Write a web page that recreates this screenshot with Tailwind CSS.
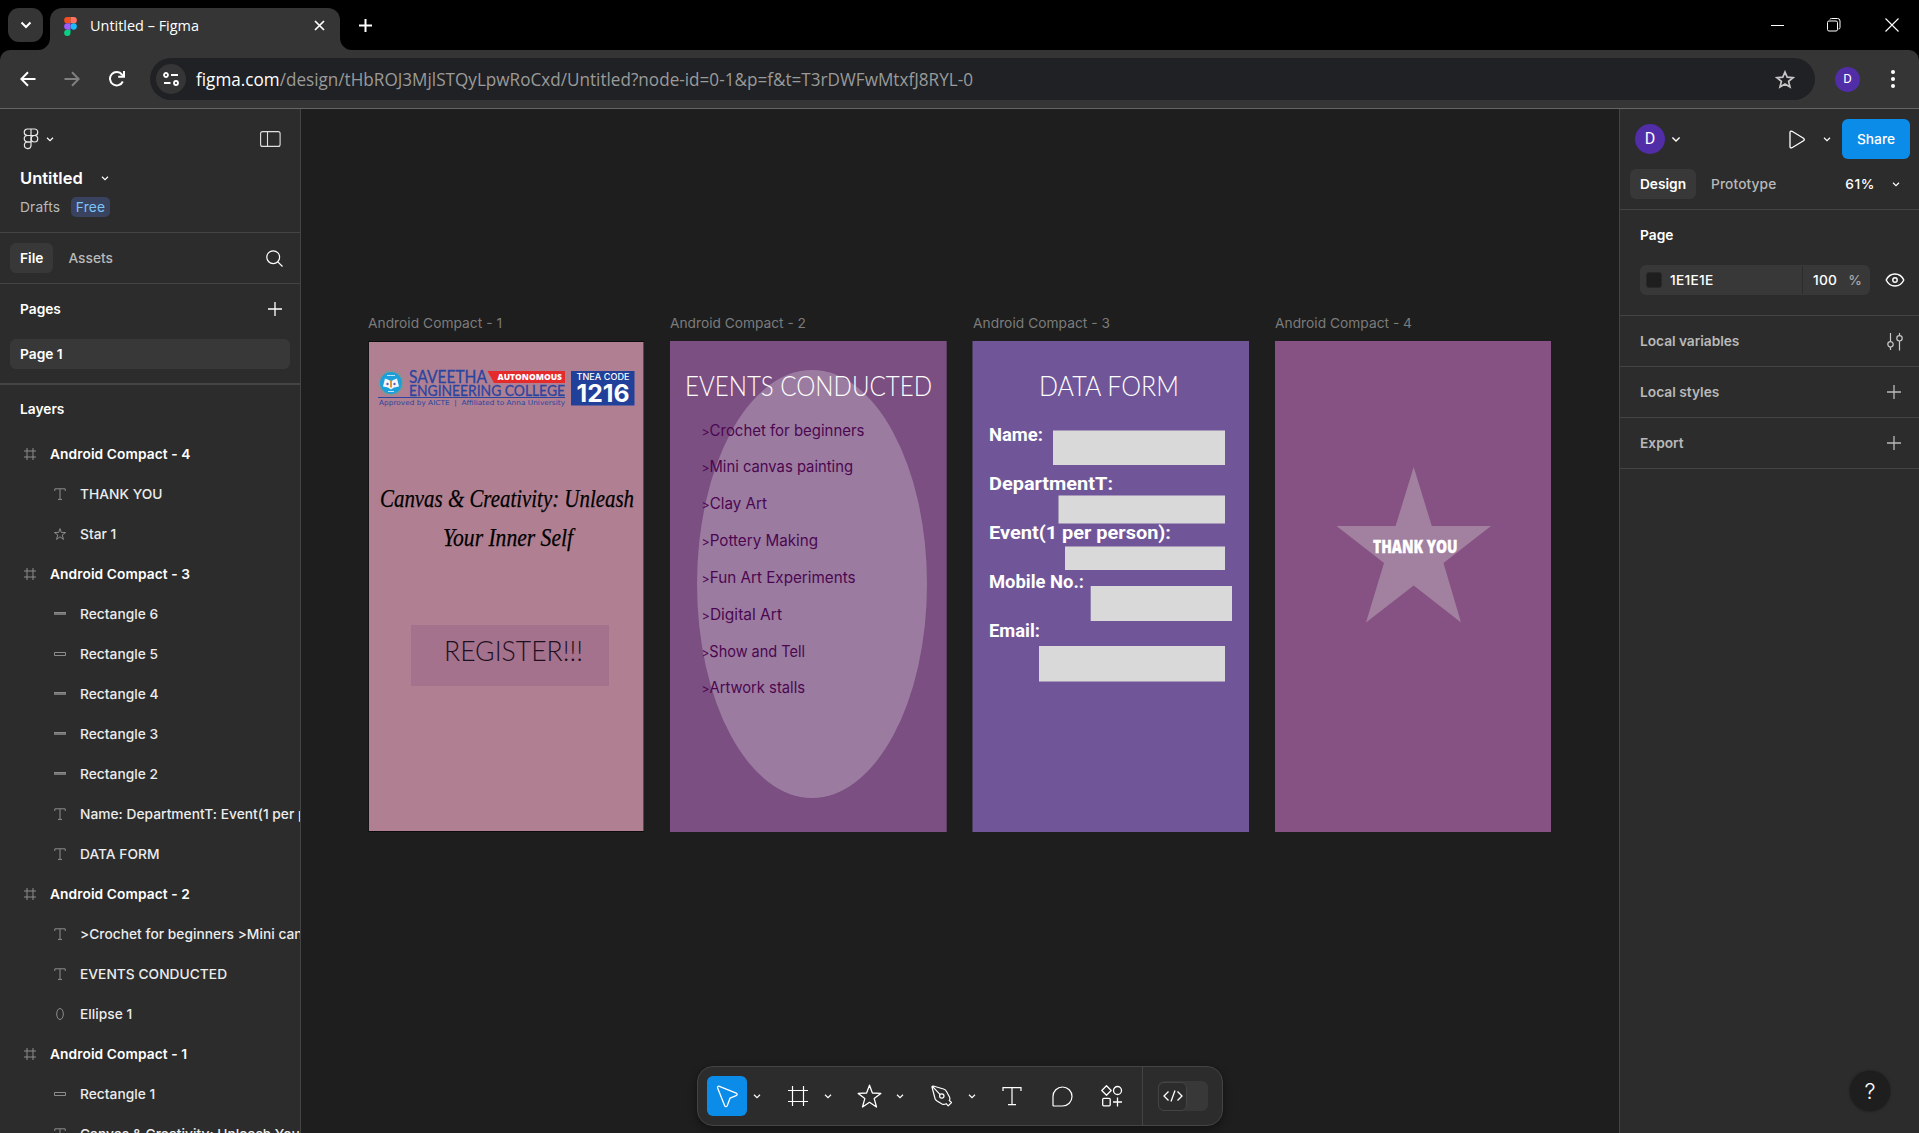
<!DOCTYPE html>
<html lang="en">
<head>
<meta charset="utf-8">
<title>Untitled – Figma</title>
<script src="https://cdn.jsdelivr.net/npm/@tailwindcss/browser@4"></script>
</head>
<body class="w-[1919px] h-[1133px] overflow-hidden flex flex-col bg-black text-white text-[13.75px] leading-[20px] font-[Inter,sans-serif]">

<!-- shared icon shapes -->
<svg class="hidden">
  <symbol id="chev" viewBox="0 0 10 10"><path d="M2 3.800 5 6.600 8 3.800" fill="none" stroke="currentColor" stroke-width="1.200"/></symbol>
  <symbol id="plus" viewBox="0 0 14 14"><path d="M7 0v14M0 7h14" fill="none" stroke="currentColor" stroke-width="1.3"/></symbol>
  <symbol id="i-frame" viewBox="0 0 12 12"><path d="M3 0v12M9 0v12M0 3h12M0 9h12" fill="none" stroke="currentColor" stroke-width="1"/></symbol>
  <symbol id="i-text" viewBox="0 0 12 12"><path d="M.8 3V.8h10.4V3M6 .8v10.6M4 11.4h4" fill="none" stroke="currentColor" stroke-width="1"/></symbol>
  <symbol id="i-star" viewBox="0 0 12 12"><path d="M6 .6 7.300 4.400 11.600 4.500 8.200 7 9.500 11.400 6 8.800 2.500 11.400 3.800 7 .4 4.500 4.700 4.400Z" fill="none" stroke="currentColor" stroke-width="1"/></symbol>
  <symbol id="i-rect" viewBox="0 0 12 12"><path d="M.5 4.5h11v3H.5z" fill="none" stroke="currentColor"/></symbol>
  <symbol id="i-rectthin" viewBox="0 0 12 12"><path d="M0 4h12v3H0z" fill="currentColor" fill-opacity=".75"/><path d="M0 4h12v1H0z" fill="currentColor"/></symbol>
  <symbol id="i-ellipse" viewBox="0 0 12 12"><ellipse cx="6" cy="6" rx="3.300" ry="5.5" fill="none" stroke="currentColor"/></symbol>
</svg>

<!-- tab strip -->
<header class="h-[50px] flex items-start pt-2 pl-2 relative">
  <div class="w-[35px] h-[34px] rounded-[11px] bg-[#353535] flex items-center justify-center">
    <svg width="12" height="8" viewBox="0 0 12 8"><path d="M1.5 1.5 6 6l4.5-4.5" fill="none" stroke="#fff" stroke-width="2"/></svg>
  </div>
  <div class="ml-[7px] w-[290px] h-[42px] rounded-t-[12px] bg-[#353535] flex items-center pl-[14px] pr-[14px] relative">
    <svg class="absolute -left-[12px] bottom-0" width="12" height="12"><path d="M12 0v12H0A12 12 0 0 0 12 0" fill="#353535"/></svg>
    <svg class="absolute -right-[12px] bottom-0" width="12" height="12"><path d="M0 0v12h12A12 12 0 0 1 0 0" fill="#353535"/></svg>
    <svg class="-mt-[6px]" width="13" height="19" viewBox="0 0 12 18"><path d="M3 0h3v6H3a3 3 0 0 1 0-6" fill="#f24e1e"/><path d="M6 0h3a3 3 0 0 1 0 6H6" fill="#ff7262"/><path d="M3 6h3v6H3a3 3 0 0 1 0-6" fill="#a259ff"/><circle cx="9" cy="9" r="3" fill="#1abcfe"/><path d="M3 12h3v3a3 3 0 1 1-3-3" fill="#0acf83"/></svg>
    <svg class="ml-[13px] -mt-[6px]" width="120" height="24"><text x="0" y="17" textLength="109" lengthAdjust="spacingAndGlyphs" fill="#fff" font-size="15" font-family="Open Sans, sans-serif">Untitled – Figma</text></svg>
    <svg class="ml-auto mr-px -mt-[8px]" width="11" height="11"><path d="M1 1l9 9M10 1l-9 9" stroke="#fff" stroke-width="1.7"/></svg>
  </div>
  <svg class="ml-[19px] mt-[11px]" width="13" height="13"><path d="M6.500 0v13M0 6.500h13" stroke="#fff" stroke-width="2"/></svg>
  <div class="ml-auto mr-[20px] mt-[10px] flex items-center">
    <svg width="13" height="13"><path d="M0 6.500h13" stroke="#fff"/></svg>
    <svg class="ml-[43px]" width="14" height="14" fill="none" stroke="#fff"><rect x=".5" y="3" width="10" height="10" rx="1.500"/><path d="M3 1.500Q3 .5 4.500.5H10.500Q13 .5 13 3V9.500Q13 11 11.500 11" /></svg>
    <svg class="ml-[44px]" width="14" height="14"><path d="M.5.5l13 13M13.500.5l-13 13" stroke="#fff" stroke-width="1.100"/></svg>
  </div>
</header>

<!-- address bar -->
<div class="h-[59px] bg-[#353535] border-b border-[#656565] rounded-t-[10px] flex items-center pl-[20px] pr-[22px]">
  <svg width="16" height="16" fill="none" stroke="#fff" stroke-width="2"><path d="M15.500 8H1.500M8 1.200 1.300 8 8 14.800"/></svg>
  <svg class="ml-[28px]" width="16" height="16" fill="none" stroke="#808080" stroke-width="2"><path d="M.5 8h14M8 1.200 14.700 8 8 14.800"/></svg>
  <svg class="ml-[29px]" width="16" height="16" fill="none" stroke="#fff" stroke-width="2"><path d="M13.800 10.500A6.700 6.700 0 1 1 13 3.600L15 5.600"/><path d="M15 0v5.800H9.200"/></svg>
  <div class="ml-[25px] w-[1665px] h-[42px] rounded-full bg-[#202124] flex items-center pl-[6px] pr-[20px]">
    <div class="w-[30px] h-[30px] rounded-full bg-[#353535] flex items-center justify-center">
      <svg width="16" height="14" fill="none" stroke="#fff" stroke-width="1.800"><circle cx="3" cy="3" r="2"/><path d="M8 3h7M1 11h6.500"/><circle cx="13" cy="11" r="2"/></svg>
    </div>
    <svg class="ml-[9px]" width="800" height="30"><text x="1" y="22" textLength="777" lengthAdjust="spacingAndGlyphs" fill="#9a9a9a" font-size="17.500" font-family="Open Sans, sans-serif"><tspan fill="#fff">figma.com</tspan>/design/tHbROJ3MjlSTQyLpwRoCxd/Untitled?node-id=0-1&amp;p=f&amp;t=T3rDWFwMtxfJ8RYL-0</text></svg>
    <svg class="ml-auto" width="20" height="19" viewBox="0 0 20 19" fill="none" stroke="#c7c7c7" stroke-width="1.700"><path d="M10 2 12.200 7.200 18 7.700 13.600 11.400 15 17 10 14 5 17 6.400 11.400 2 7.700 7.800 7.200Z"/></svg>
  </div>
  <div class="ml-[20px] w-[25px] h-[25px] rounded-full bg-[#512da8] flex items-center justify-center text-[13px] font-[Roboto,sans-serif]">D</div>
  <svg class="ml-auto" width="8" height="20" fill="#fff"><circle cx="4" cy="3" r="2"/><circle cx="4" cy="10" r="2"/><circle cx="4" cy="17" r="2"/></svg>
</div>

<div class="flex-1 min-h-0 flex">
  <!-- left panel -->
  <aside class="w-[301px] shrink-0 bg-[#2c2c2c] border-r border-[#444] flex flex-col overflow-hidden">
    <div class="h-[124px] border-b border-[#444] shrink-0">
      <div class="flex items-center pl-[23px] pr-[19px] pt-[19px]">
        <svg width="16" height="22" viewBox="0 0 16 22" fill="none" stroke="#e8e8e8" stroke-width="1.200"><path d="M8 1H4.500a3.200 3.200 0 0 0 0 6.500H8zM8 1h3.500a3.200 3.200 0 0 1 0 6.500H8zM8 7.500H4.500a3.200 3.200 0 0 0 0 6.500H8z"/><circle cx="11.500" cy="10.750" r="3.250"/><path d="M8 14H4.500A3.300 3.300 0 1 0 8 17.500z"/></svg>
        <svg class="ml-[6px] text-white" width="10" height="10"><use href="#chev"/></svg>
        <svg class="ml-auto" width="21" height="16" fill="none" stroke="#e0e0e0" stroke-width="1.100"><rect x=".6" y=".6" width="19.500" height="14.800" rx="2"/><path d="M7.500.5v15"/></svg>
      </div>
      <div class="flex items-center pl-[20px] mt-[18px]">
        <span class="text-[16.500px] font-semibold tracking-[0.020px]">Untitled</span>
        <svg class="ml-[17px]" width="10" height="10"><use href="#chev"/></svg>
      </div>
      <div class="flex items-center pl-[20px] mt-[9px]">
        <span class="text-[#b9b9b9] w-[41px] tracking-[0.180px]">Drafts</span>
        <span class="ml-[10px] h-[20px] w-[39px] text-center rounded-[5px] bg-[#394360] text-[#7cc4f8] tracking-[0.150px]">Free</span>
      </div>
    </div>
    <div class="h-[51px] shrink-0 border-b border-[#444] flex items-center pl-[10px] pr-[17px]">
      <span class="h-[30px] px-[10px] leading-[30px] rounded-[6px] bg-[#383838] font-semibold">File</span>
      <span class="ml-[15px] text-[#b9b9b9] font-medium">Assets</span>
      <svg class="ml-auto" width="17" height="17" fill="none" stroke="#fff" stroke-width="1.200"><circle cx="7.200" cy="7.200" r="6.400"/><path d="M11.800 11.800 16.500 16.500"/></svg>
    </div>
    <div class="h-[101px] shrink-0 border-b-2 border-[#444]">
      <div class="h-[50px] flex items-center pl-[20px] pr-[18px]"><span class="font-semibold">Pages</span><svg class="ml-auto" width="14" height="14"><use href="#plus"/></svg></div>
      <div class="mx-[10px] mt-[5px] h-[30px] leading-[30px] rounded-[6px] bg-[#383838] pl-[10px] font-semibold">Page 1</div>
    </div>
    <div class="h-[49px] shrink-0 pl-[20px] pt-[14px] font-semibold">Layers</div>
    <div id="layers" class="whitespace-nowrap"></div>
  </aside>

  <!-- canvas -->
  <main class="w-[1318px] shrink-0 bg-[#1e1e1e] relative overflow-hidden">
    <svg class="absolute left-0 top-0" width="1318" height="1024" viewBox="301 109 1318 1024">
      <g fill="#7c7c7c" font-family="Inter, sans-serif" font-size="13.750">
        <text x="368" y="328" textLength="134">Android Compact - 1</text>
        <text x="670" y="328" textLength="136">Android Compact - 2</text>
        <text x="973" y="328" textLength="137">Android Compact - 3</text>
        <text x="1275" y="328" textLength="137">Android Compact - 4</text>
      </g>
      <!-- frame 1 -->
      <rect x="368.500" y="341" width="275.500" height="491" fill="#0c0c0c"/>
      <rect x="369" y="342" width="274.500" height="489" fill="#b08092"/>
      <circle cx="391" cy="383" r="11.800" fill="none" stroke="#7d9a8c" stroke-width="1.800" stroke-dasharray="1.800 1.290"/>
      <circle cx="391" cy="383" r="11" fill="#1ba0dc"/>
      <path d="M385 378.500l4 1.500 2 2 2-2 4-1.500 2 8-5 1-3 2-3-2-5-1z" fill="#f4f6fa"/>
      <path d="M391 380.500v7" stroke="#d99a2b" stroke-width="2"/><circle cx="387.500" cy="384" r="1.200" fill="#6a5ac0"/><circle cx="394.500" cy="384" r="1.200" fill="#6a5ac0"/>
      <path d="M387 375.500h8M388 391.500h6" stroke="#bfe6f7" stroke-width="1.200"/>
      <g fill="#2a45a0" font-family="Lato, sans-serif">
        <text x="409" y="382.800" font-size="16.500" textLength="78" lengthAdjust="spacingAndGlyphs" stroke="#2a45a0" stroke-width=".3">SAVEETHA</text>
        <text x="409" y="395.500" font-size="14.800" textLength="156" lengthAdjust="spacingAndGlyphs" stroke="#2a45a0" stroke-width=".3">ENGINEERING COLLEGE</text>
        <text x="379" y="405" font-size="6.800" font-family="DejaVu Sans, sans-serif" xml:space="preserve" textLength="186" lengthAdjust="spacingAndGlyphs">Approved by AICTE  |  Affiliated to Anna University</text>
      </g>
      <path d="M378 397.500h187" stroke="#2a45a0"/>
      <path d="M487.500 371H565v12h-71z" fill="#e52a2c"/>
      <text x="497.500" y="380" font-size="8.500" font-weight="800" fill="#fff" font-family="Open Sans, sans-serif" textLength="64.500" lengthAdjust="spacingAndGlyphs">AUTONOMOUS</text>
      <rect x="571" y="371" width="63.500" height="34.500" fill="#21409a"/>
      <text x="576.500" y="380.300" font-size="8.500" font-weight="500" fill="#fff" font-family="Inter, sans-serif" textLength="53" lengthAdjust="spacingAndGlyphs">TNEA CODE</text>
      <text x="576.500" y="401.500" font-size="24" font-weight="700" fill="#fff" font-family="Inter, sans-serif" textLength="53" lengthAdjust="spacingAndGlyphs">1216</text>
      <g fill="#000" stroke="#000" stroke-width=".25" font-family="Liberation Serif, serif" font-style="italic" font-size="24.500">
        <text x="380" y="507" textLength="254" lengthAdjust="spacingAndGlyphs">Canvas &amp; Creativity: Unleash</text>
        <text x="443" y="546" textLength="130" lengthAdjust="spacingAndGlyphs">Your Inner Self</text>
      </g>
      <rect x="411" y="625" width="198" height="61" fill="#a4728d"/>
      <text x="444" y="661" font-family="Lato, sans-serif" font-weight="300" font-size="28" fill="#1e1020" textLength="139" lengthAdjust="spacingAndGlyphs">REGISTER!!!</text>
      <!-- frame 2 -->
      <rect x="670" y="341" width="276.700" height="491" fill="#7b4f82"/>
      <ellipse cx="812" cy="584" rx="115" ry="214" fill="#9b7ca0"/>
      <text x="685" y="395.500" font-family="Lato, sans-serif" font-weight="300" font-size="27.500" fill="#fff" textLength="247" lengthAdjust="spacingAndGlyphs">EVENTS CONDUCTED</text>
      <g fill="#4c0650" font-family="Inter, sans-serif" font-size="15.300">
        <text x="701.500" y="435.500" textLength="163" lengthAdjust="spacingAndGlyphs"><tspan font-size="12.500">&gt;</tspan>Crochet for beginners</text>
        <text x="701.500" y="472.300" textLength="151.500" lengthAdjust="spacingAndGlyphs"><tspan font-size="12.500">&gt;</tspan>Mini canvas painting</text>
        <text x="701.500" y="509.100" textLength="65.500" lengthAdjust="spacingAndGlyphs"><tspan font-size="12.500">&gt;</tspan>Clay Art</text>
        <text x="701.500" y="546" textLength="116.500" lengthAdjust="spacingAndGlyphs"><tspan font-size="12.500">&gt;</tspan>Pottery Making</text>
        <text x="701.500" y="582.900" textLength="154" lengthAdjust="spacingAndGlyphs"><tspan font-size="12.500">&gt;</tspan>Fun Art Experiments</text>
        <text x="701.500" y="619.700" textLength="80.500" lengthAdjust="spacingAndGlyphs"><tspan font-size="12.500">&gt;</tspan>Digital Art</text>
        <text x="701.500" y="656.500" textLength="103.500" lengthAdjust="spacingAndGlyphs"><tspan font-size="12.500">&gt;</tspan>Show and Tell</text>
        <text x="701.500" y="693.200" textLength="103.500" lengthAdjust="spacingAndGlyphs"><tspan font-size="12.500">&gt;</tspan>Artwork stalls</text>
      </g>
      <!-- frame 3 -->
      <rect x="972.500" y="341" width="276.500" height="491" fill="#705698"/>
      <text x="1039" y="395.500" font-family="Lato, sans-serif" font-weight="300" font-size="27.500" fill="#fff" textLength="140" lengthAdjust="spacingAndGlyphs">DATA FORM</text>
      <g fill="#d9d9d9">
        <rect x="1053" y="430.500" width="172" height="34.500"/>
        <rect x="1058.500" y="495.500" width="166.500" height="28"/>
        <rect x="1065" y="546.500" width="160" height="23.500"/>
        <rect x="1090.700" y="586" width="141.300" height="35"/>
        <rect x="1039" y="646" width="186" height="35.500"/>
      </g>
      <g fill="#fff" font-family="Roboto, sans-serif" font-weight="700" font-size="19">
        <text x="989" y="440.500" textLength="54" lengthAdjust="spacingAndGlyphs">Name:</text>
        <text x="989" y="489.700" textLength="124" lengthAdjust="spacingAndGlyphs">DepartmentT:</text>
        <text x="989" y="538.700" textLength="182" lengthAdjust="spacingAndGlyphs">Event(1 per person):</text>
        <text x="989" y="587.700" textLength="95" lengthAdjust="spacingAndGlyphs">Mobile No.:</text>
        <text x="989" y="637" textLength="51" lengthAdjust="spacingAndGlyphs">Email:</text>
      </g>
      <!-- frame 4 -->
      <rect x="1275" y="341" width="276" height="491" fill="#865283"/>
      <path d="M1413.700 467 1431.800 526H1491L1443.500 563 1461 622.500 1413.700 585.500 1366 622.500 1384 563 1336.500 526H1395.600Z" fill="#a2809f"/>
      <text x="1373" y="553" fill="#fff" stroke="#fff" stroke-width=".4" font-family="Open Sans, sans-serif" font-weight="800" font-size="17.500" textLength="84.500" lengthAdjust="spacingAndGlyphs">THANK YOU</text>
    </svg>

    <!-- tool bar -->
    <div class="absolute left-[396px] top-[957px] w-[526px] h-[60px] rounded-[16px] bg-[#2c2c2c] border border-[#444] shadow-[0_3px_8px_rgba(0,0,0,0.4)] flex items-center pl-[9px]">
      <div class="w-[40px] h-[40px] rounded-[6px] bg-[#0c8ce9] flex items-center justify-center">
        <svg width="24" height="24" viewBox="0 0 24 24" fill="none" stroke="#fff" stroke-width="1.300" stroke-linejoin="round"><path d="M2.600 3.900C2.200 2.600 3.200 1.800 4.400 2.300L21.200 9.200C22.500 9.800 22.400 11.200 21.200 11.700L15 14.200 12.200 21.800C11.700 23 10.200 23 9.700 21.800Z"/></svg>
      </div>
      <svg class="ml-[5px] shrink-0" width="10" height="10"><use href="#chev"/></svg>
      <svg class="ml-[26px] shrink-0" width="20" height="20" fill="none" stroke="#fff" stroke-width="1.200"><path d="M4.500 0v20M15.500 0v20M0 4.500h20M0 15.500h20"/></svg>
      <svg class="ml-[15px] shrink-0" width="10" height="10"><use href="#chev"/></svg>
      <svg class="ml-[24px] shrink-0" width="25" height="25" viewBox="0 0 25 25" fill="none" stroke="#fff" stroke-width="1.300" stroke-linejoin="round"><path d="M12.500 1.200 15.400 9 23.800 9.400 17.200 14.600 19.500 23 12.500 18.300 5.500 23 7.800 14.600 1.200 9.400 9.600 9Z"/></svg>
      <svg class="ml-[13px] shrink-0" width="10" height="10"><use href="#chev"/></svg>
      <svg class="ml-[26px] shrink-0" width="22" height="22" viewBox="0 0 22 22" fill="none" stroke="#fff" stroke-width="1.200" stroke-linejoin="round"><path d="M1 2Q1 1 2.200 1L12.500 4Q14.500 4.700 15.500 6.500L18.500 12Q19.500 14 18.300 15.500L20.500 17.500 17.200 20.800 15.200 18.700Q13 20 11 19L6 16Q4.500 15 4 13.500ZM1.400 1.400 9.200 9.600"/><circle cx="10.800" cy="11" r="2.200"/></svg>
      <svg class="ml-[14px] shrink-0" width="10" height="10"><use href="#chev"/></svg>
      <svg class="ml-[25px] shrink-0" width="20" height="20" fill="none" stroke="#fff" stroke-width="1.200"><path d="M1 5V1.600h18V5M10 1.600v17M6 18.600h8"/></svg>
      <svg class="ml-[30px] shrink-0" width="21" height="21" fill="none" stroke="#fff" stroke-width="1.200"><path d="M10.500 1A9.500 9.500 0 1 1 10.500 20H2Q1 20 1 19V10.500A9.500 9.500 0 0 1 10.500 1Z"/></svg>
      <svg class="ml-[28px] shrink-0" width="22" height="22" viewBox="0 0 22 22" fill="none" stroke="#fff" stroke-width="1.300" stroke-linejoin="round"><path d="M5.500.8 10.200 5.500 5.500 10.200.8 5.500Z"/><circle cx="16.500" cy="5.500" r="4"/><rect x="1.700" y="13.300" width="7.500" height="7.500" rx="1"/><path d="M16.500 12.500v9M12 17h9"/></svg>
      <div class="ml-[19px] w-px h-full bg-[#444] shrink-0"></div>
      <div class="ml-[15px] w-[50px] h-[30px] rounded-[6px] bg-[#383838] flex items-center shrink-0">
        <div class="w-[29px] h-[29px] rounded-[6px] bg-[#2c2c2c] border border-[#444] flex items-center justify-center">
          <svg class="shrink-0" width="20" height="12" fill="none" stroke="#fff" stroke-width="1.300"><path d="M5.500 1.500 1 6l4.500 4.500M14.500 1.500 19 6l-4.500 4.500M12 .5 8 11.500"/></svg>
        </div>
      </div>
    </div>
  </main>

  <!-- right panel -->
  <aside class="flex-1 bg-[#2c2c2c] border-l border-[#444] relative flex flex-col">
    <div class="h-[101px] border-b border-[#444] shrink-0">
      <div class="flex items-center pl-[15px] pr-[9px] pt-[10px]">
        <div class="w-[30px] h-[30px] rounded-full bg-[#512da8] flex items-center justify-center text-[16px] font-[Roboto,sans-serif]">D</div>
        <svg class="ml-[5px]" width="12" height="12"><use href="#chev"/></svg>
        <svg class="ml-auto" width="17" height="19" fill="none" stroke="#fff" stroke-width="1.300"><path d="M1 2.500Q1 .5 3 1.300L14.500 8.200Q16.200 9.500 14.500 10.800L3 17.700Q1 18.500 1 16.500Z"/></svg>
        <svg class="ml-[16px]" width="10" height="10"><use href="#chev"/></svg>
        <div class="ml-[10px] w-[68px] h-[40px] leading-[40px] rounded-[6px] bg-[#0c8ce9] text-center font-medium">Share</div>
      </div>
      <div class="flex items-center pl-[10px] pr-[18px] mt-[10px]">
        <span class="h-[30px] w-[66px] leading-[30px] text-center rounded-[6px] bg-[#383838] font-semibold">Design</span>
        <span class="ml-[15px] text-[#b9b9b9] font-medium tracking-[0.100px]">Prototype</span>
        <span class="ml-auto font-medium tracking-[0.600px]">61%</span>
        <svg class="ml-[16px]" width="10" height="10"><use href="#chev"/></svg>
      </div>
    </div>
    <div class="h-[106px] shrink-0 border-b border-[#444] pl-[20px] pr-[14px]">
      <div class="pt-[15px] font-semibold">Page</div>
      <div class="flex items-center mt-[20px]">
        <div class="w-[230px] h-[30px] rounded-[6px] bg-[#383838] flex items-center pl-[6px] pr-[8px] font-medium">
          <span class="w-[16px] h-[16px] rounded-[3px] bg-[#1e1e1e] border border-[#282828]"></span>
          <span class="ml-[8px] w-[132px] tracking-[0.250px]">1E1E1E</span>
          <span class="w-px h-[28px] bg-[#2c2c2c]"></span>
          <span class="ml-[10px] tracking-[0.250px]">100</span>
          <span class="ml-auto text-[#a8a8a8]">%</span>
        </div>
        <svg class="ml-auto" width="20" height="14" fill="none" stroke="#fff" stroke-width="1.400"><path d="M1.200 7Q4 1 10 1T18.800 7Q16 13 10 13T1.200 7Z"/><circle cx="10" cy="7" r="2.200"/></svg>
      </div>
    </div>
    <div class="h-[51px] shrink-0 border-b border-[#444] flex items-center pl-[20px] pr-[15px] text-[#b9b9b9] font-semibold tracking-[-0.050px]">Local variables
      <svg class="ml-auto" width="18" height="19" fill="none" stroke="#c8c8c8" stroke-width="1.200"><path d="M4.500 1v8.500M4.500 15v3M13.500 1v2.500M13.500 9v9.500"/><circle cx="4.500" cy="12.300" r="2.700"/><circle cx="13.500" cy="6.300" r="2.700"/></svg></div>
    <div class="h-[51px] shrink-0 border-b border-[#444] flex items-center pl-[20px] pr-[18px] text-[#b9b9b9] font-semibold">Local styles<svg class="ml-auto" width="14" height="14"><use href="#plus"/></svg></div>
    <div class="h-[51px] shrink-0 border-b border-[#444] flex items-center pl-[20px] pr-[18px] text-[#b9b9b9] font-semibold">Export<svg class="ml-auto" width="14" height="14"><use href="#plus"/></svg></div>
    <div class="absolute right-[29px] bottom-[22px] w-[40px] h-[40px] rounded-full bg-[#1e1e1e] shadow-[0_0_3px_rgba(0,0,0,0.5)] flex items-center justify-center text-[22px] font-light">?</div>
  </aside>
</div>

<script>
const layers = [
  ['frame','Android Compact - 4'],['text','THANK YOU'],['star','Star 1'],
  ['frame','Android Compact - 3'],['rectthin','Rectangle 6'],['rect','Rectangle 5'],['rectthin','Rectangle 4'],['rectthin','Rectangle 3'],['rectthin','Rectangle 2'],
  ['text','Name: DepartmentT: Event(1 per person): Mobile No.: Email:'],['text','DATA FORM'],
  ['frame','Android Compact - 2'],['text','>Crochet for beginners >Mini canvas painting'],['text','EVENTS CONDUCTED'],['ellipse','Ellipse 1'],
  ['frame','Android Compact - 1'],['rect','Rectangle 1'],['text','Canvas & Creativity: Unleash Your Inner Self']
];
const box = document.getElementById('layers');
for (const [kind, name] of layers) {
  const row = document.createElement('div');
  row.className = kind === 'frame' ? 'h-[40px] flex items-center pl-[24px] font-semibold tracking-[0.080px]' : 'h-[40px] flex items-center pl-[54px] font-medium text-[#ececec] tracking-[0.030px]';
  row.innerHTML = '<svg class="shrink-0 text-[#8c8c8c]" width="12" height="12"><use href="#i-' + kind + '"/></svg><span class="ml-[14px]"></span>';
  row.lastChild.textContent = name;
  box.append(row);
}
</script>
</body>
</html>
